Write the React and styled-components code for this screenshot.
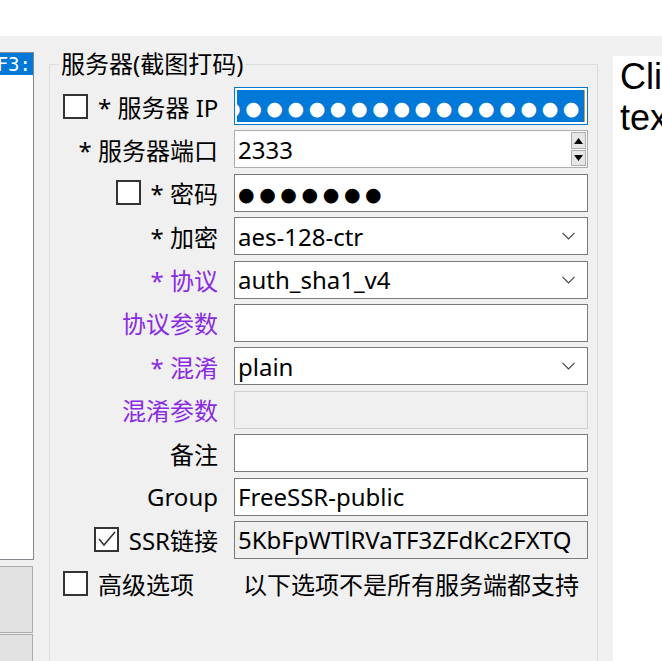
import React from "react";
import styled, { createGlobalStyle } from "styled-components";

const GlobalStyle = createGlobalStyle`
  *, *::before, *::after {
    box-sizing: border-box;
  }
  html, body {
    margin: 0;
    padding: 0;
    overflow: hidden;
    background: #fff;
  }
  body {
    font-family: "Noto Sans", "Noto Sans CJK SC", sans-serif;
  }
`;

const Window = styled.div`
  width: 662px;
  height: 661px;
  overflow: hidden;
  display: flex;
  flex-direction: column;
  background: #fff;
`;

const TopStrip = styled.div`
  flex: none;
  height: 36px;
  background: #fff;
`;

const Body = styled.div`
  flex: 1;
  min-height: 0;
  display: flex;
  align-items: flex-start;
  overflow: hidden;
  background: #f0f0f0;
`;

const LeftColumn = styled.div`
  flex: none;
  width: 34px;
  margin-top: 16px;
  display: flex;
  flex-direction: column;
`;

const ServerList = styled.div`
  height: 508px;
  background: #fff;
  border: 1px solid #828790;
  border-left: none;
  overflow: hidden;
`;

const ListItem = styled.div`
  display: flex;
  justify-content: flex-end;
  height: 22px;
  line-height: 22px;
  padding-right: 2px;
  overflow: hidden;
  white-space: nowrap;
  font-family: "DejaVu Sans Mono", "Liberation Mono", monospace;
  font-size: 19px;
  color: ${({ $selected }) => ($selected ? "#fff" : "#000")};
  background: ${({ $selected }) => ($selected ? "#0078d7" : "transparent")};
`;

const SideButton = styled.div`
  width: 33px;
  height: 67px;
  margin-top: ${({ $first }) => ($first ? "6px" : "1px")};
  background: #e1e1e1;
  border: 1px solid #adadad;
  border-left: none;
`;

const GroupBox = styled.fieldset`
  flex: none;
  width: 549px;
  height: 700px;
  min-width: 0;
  margin: 14px 0 0 15px;
  padding: 9px 9px 0 13px;
  border: 1px solid #dcdcdc;
`;

const Legend = styled.legend`
  margin-left: -4px;
  padding: 0 2px;
  font-size: 24px;
  line-height: 28px;
  color: #000;
`;

const FormGrid = styled.div`
  display: grid;
  grid-template-columns: 155px 354px;
  grid-auto-rows: 38px;
  column-gap: 16px;
  row-gap: 5.4px;
`;

const Label = styled.div`
  display: flex;
  align-items: center;
  justify-content: ${({ $start }) => ($start ? "flex-start" : "flex-end")};
  gap: 10px;
  font-size: 24px;
  white-space: nowrap;
  color: ${({ $purple }) => ($purple ? "#8a2be2" : "#000")};
`;

const fieldLook = {
  normal: { border: "#7a7a7a", bg: "#fff", pad: "0 3px" },
  focus: { border: "#0078d7", bg: "#fff", pad: "2px" },
  spin: { border: "#adadad", bg: "#fff", pad: "0 1px 0 3px" },
  disabled: { border: "#cfcfcf", bg: "#f0f0f0", pad: "0 3px" },
  readonly: { border: "#7a7a7a", bg: "#f0f0f0", pad: "0 3px" },
};

const Field = styled.div`
  display: flex;
  align-items: center;
  min-width: 0;
  overflow: hidden;
  white-space: nowrap;
  font-size: 24px;
  color: #000;
  border: 1px solid ${({ $look = "normal" }) => fieldLook[$look].border};
  background: ${({ $look = "normal" }) => fieldLook[$look].bg};
  padding: ${({ $look = "normal" }) => fieldLook[$look].pad};
`;

const Selection = styled.div`
  flex: 1;
  height: 100%;
  display: flex;
  align-items: center;
  justify-content: flex-end;
  overflow: hidden;
  color: #fff;
  background: #0078d7;
  border-right: 1px solid #f7941d;
`;

const Dots = styled.span`
  font-family: "DejaVu Sans", sans-serif;
  font-size: 19px;
  letter-spacing: 4.6px;
  white-space: nowrap;
  padding-top: 3px;
  color: ${({ $light }) => ($light ? "#fff" : "#000")};
`;

const SpinColumn = styled.div`
  margin-left: auto;
  height: 100%;
  padding: 1px 0;
  display: flex;
  flex-direction: column;
  gap: 1px;
`;

const SpinButton = styled.div`
  width: 15px;
  flex: 1;
  display: flex;
  align-items: center;
  justify-content: center;
  background: #e6e6e6;
  border: 1px solid #adadad;
`;

const Chevron = styled.svg`
  margin-left: auto;
  margin-right: 9px;
  flex: none;
`;

const Hint = styled.div`
  align-self: center;
  justify-self: center;
  font-size: 24px;
  white-space: nowrap;
  color: #000;
`;

const Box = styled.span`
  flex: none;
  width: 25px;
  height: 25px;
  display: flex;
  align-items: center;
  justify-content: center;
  background: #fff;
  border: 2px solid #333;
`;

const RightPanel = styled.div`
  flex: none;
  width: 300px;
  height: 700px;
  margin: 20px 0 0 15px;
  padding-left: 7px;
  background: #fff;
`;

const Caption = styled.div`
  font-family: "Liberation Sans", Arial, sans-serif;
  font-size: 36px;
  line-height: 41.4px;
  white-space: nowrap;
  color: #000;
`;

function CheckBox({ checked }) {
  return (
    <Box>
      {checked && (
        <svg width="21" height="21" viewBox="0 0 21 21">
          <polyline
            points="3,10 8,16 19,3"
            fill="none"
            stroke="#333"
            strokeWidth="1.6"
          />
        </svg>
      )}
    </Box>
  );
}

function Arrow({ up }) {
  return (
    <svg width="9" height="6" viewBox="0 0 9 6">
      <polygon points={up ? "0,6 4.5,0 9,6" : "0,0 9,0 4.5,6"} fill="#000" />
    </svg>
  );
}

function ComboField({ value }) {
  return (
    <Field>
      {value}
      <Chevron width="13" height="8" viewBox="0 0 13 8">
        <polyline
          points="0.5,0.8 6.5,6.8 12.5,0.8"
          fill="none"
          stroke="#444"
          strokeWidth="1.2"
        />
      </Chevron>
    </Field>
  );
}

export default function App() {
  return (
    <>
      <GlobalStyle />
      <Window>
        <TopStrip />
        <Body>
          <LeftColumn>
            <ServerList>
              <ListItem $selected>ssr F3:</ListItem>
            </ServerList>
            <SideButton $first />
            <SideButton />
          </LeftColumn>

          <GroupBox>
            <Legend>服务器(截图打码)</Legend>
            <FormGrid>
              <Label $start>
                <CheckBox />
                * 服务器 IP
              </Label>
              <Field $look="focus">
                <Selection>
                  <Dots $light>{"●".repeat(30)}</Dots>
                </Selection>
              </Field>

              <Label>* 服务器端口</Label>
              <Field $look="spin">
                2333
                <SpinColumn>
                  <SpinButton>
                    <Arrow up />
                  </SpinButton>
                  <SpinButton>
                    <Arrow />
                  </SpinButton>
                </SpinColumn>
              </Field>

              <Label>
                <CheckBox />
                * 密码
              </Label>
              <Field>
                <Dots>{"●".repeat(7)}</Dots>
              </Field>

              <Label>* 加密</Label>
              <ComboField value="aes-128-ctr" />

              <Label $purple>* 协议</Label>
              <ComboField value="auth_sha1_v4" />

              <Label $purple>协议参数</Label>
              <Field />

              <Label $purple>* 混淆</Label>
              <ComboField value="plain" />

              <Label $purple>混淆参数</Label>
              <Field $look="disabled" />

              <Label>备注</Label>
              <Field />

              <Label>Group</Label>
              <Field>FreeSSR-public</Field>

              <Label>
                <CheckBox checked />
                SSR链接
              </Label>
              <Field $look="readonly">5KbFpWTlRVaTF3ZFdKc2FXTQ</Field>

              <Label $start>
                <CheckBox />
                高级选项
              </Label>
              <Hint>以下选项不是所有服务端都支持</Hint>
            </FormGrid>
          </GroupBox>

          <RightPanel>
            <Caption>
              Click
              <br />
              text
            </Caption>
          </RightPanel>
        </Body>
      </Window>
    </>
  );
}
